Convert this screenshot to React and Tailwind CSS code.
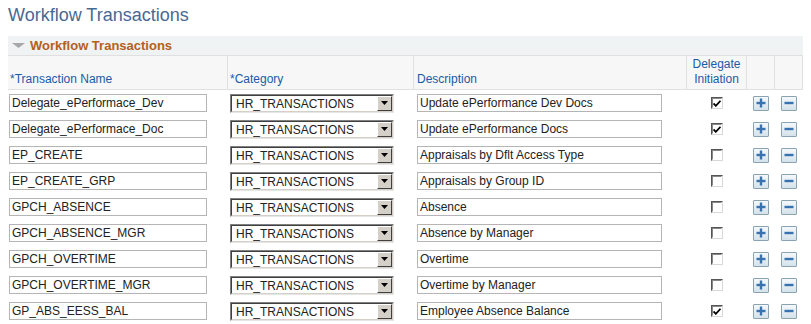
import React from 'react';

const rows = [
  { name: 'Delegate_ePerformace_Dev', desc: 'Update ePerformance Dev Docs', checked: true },
  { name: 'Delegate_ePerformace_Doc', desc: 'Update ePerformance Docs', checked: true },
  { name: 'EP_CREATE', desc: 'Appraisals by Dflt Access Type', checked: false },
  { name: 'EP_CREATE_GRP', desc: 'Appraisals by Group ID', checked: false },
  { name: 'GPCH_ABSENCE', desc: 'Absence', checked: false },
  { name: 'GPCH_ABSENCE_MGR', desc: 'Absence by Manager', checked: false },
  { name: 'GPCH_OVERTIME', desc: 'Overtime', checked: false },
  { name: 'GPCH_OVERTIME_MGR', desc: 'Overtime by Manager', checked: false },
  { name: 'GP_ABS_EESS_BAL', desc: 'Employee Absence Balance', checked: true },
];

const cols = 'grid grid-cols-[220px_186px_273px_60px_28px_28px]';

const TextBox = ({ value, width }) => (
  <div
    className={`${width} h-[18px] border border-[#b5b5b5] bg-white pl-[2px] text-[12px] leading-[17px] text-[#222] whitespace-nowrap overflow-hidden`}
  >
    {value}
  </div>
);

const SelectBox = () => (
  <div className="ml-[2px] w-[164px] h-[19px] border border-t-[#808080] border-l-[#808080] border-b-[#e6e6e6] border-r-[#e6e6e6]">
    <div className="flex h-full border border-t-[#404040] border-l-[#404040] border-b-[#d4d0c8] border-r-[#d4d0c8] bg-white">
      <div className="flex-1 pl-[4px] text-[12px] leading-[16px] text-[#222] whitespace-nowrap">HR_TRANSACTIONS</div>
      <div className="w-[15px] h-full flex items-center justify-center bg-[#d4d0c8] border border-t-white border-l-white border-b-[#404040] border-r-[#404040]">
        <svg width="7" height="4" viewBox="0 0 7 4">
          <polygon points="0,0 7,0 3.5,4" fill="#000" />
        </svg>
      </div>
    </div>
  </div>
);

const CheckBox = ({ checked }) => (
  <div className="w-[12px] h-[12px] border border-t-[#555] border-l-[#555] border-b-[#d8d8d8] border-r-[#d8d8d8]">
    <div className="w-full h-full bg-white border border-t-[#888] border-l-[#888] border-b-white border-r-white flex items-center justify-center">
      {checked && (
        <svg width="8" height="7" viewBox="0 0 8 7">
          <path d="M0.5 3.5 L2.8 5.8 L7.5 0.8" stroke="#000" strokeWidth="1.8" fill="none" />
        </svg>
      )}
    </div>
  </div>
);

const IconButton = ({ plus }) => (
  <div className="w-[16px] h-[15px] border border-[#8aa3b3] rounded-[1px] bg-gradient-to-b from-[#f5f8fa] to-[#d5e2ea] flex items-center justify-center">
    <svg width="10" height="10" viewBox="0 0 10 10">
      <rect x="0.5" y="3.8" width="9" height="2.4" fill="#3a72b0" />
      {plus && <rect x="3.8" y="0.5" width="2.4" height="9" fill="#3a72b0" />}
    </svg>
  </div>
);

export default function App() {
  return (
    <div className="w-[811px] h-[324px] bg-white font-['Liberation_Sans',Arial,sans-serif] overflow-hidden">
      <h1 className="pl-[8px] pt-[5px] text-[18px] leading-[21px] text-[#4a6893]">Workflow Transactions</h1>

      <div className="mx-[8px] mt-[10px]">
        <div className="h-[19px] bg-[#eff3f4] flex items-center">
          <svg className="ml-[4px]" width="13" height="6" viewBox="0 0 13 6">
            <polygon points="0,0 13,0 6.5,5" fill="#a8a8a8" />
          </svg>
          <span className="ml-[5px] text-[13px] font-bold text-[#b4601c]">Workflow Transactions</span>
        </div>

        <div className={`${cols} h-[35px] bg-[#f7f7f7] border-t border-b border-[#e0e0e0] text-[12px] leading-[15px] text-[#1c5aa6]`}>
          <div className="border-r border-[#e0e0e0] flex items-end pl-[2px] pb-[2px]">*Transaction Name</div>
          <div className="border-r border-[#e0e0e0] flex items-end pl-[2px] pb-[2px]">*Category</div>
          <div className="border-r border-[#e0e0e0] flex items-end pl-[3px] pb-[2px]">Description</div>
          <div className="border-r border-[#e0e0e0] flex items-end justify-center text-center pb-[2px]">
            Delegate<br />Initiation
          </div>
          <div className="border-r border-[#e0e0e0]" />
          <div className="border-r border-[#e0e0e0]" />
        </div>

        {rows.map((r) => (
          <div key={r.name} className={`${cols} h-[26px] items-center`}>
            <div className="pl-[1px]">
              <TextBox value={r.name} width="w-[198px]" />
            </div>
            <div>
              <SelectBox />
            </div>
            <div className="pl-[3px]">
              <TextBox value={r.desc} width="w-[245px]" />
            </div>
            <div className="flex justify-center">
              <CheckBox checked={r.checked} />
            </div>
            <div className="flex justify-center">
              <IconButton plus />
            </div>
            <div className="flex justify-center">
              <IconButton />
            </div>
          </div>
        ))}
      </div>
    </div>
  );
}
